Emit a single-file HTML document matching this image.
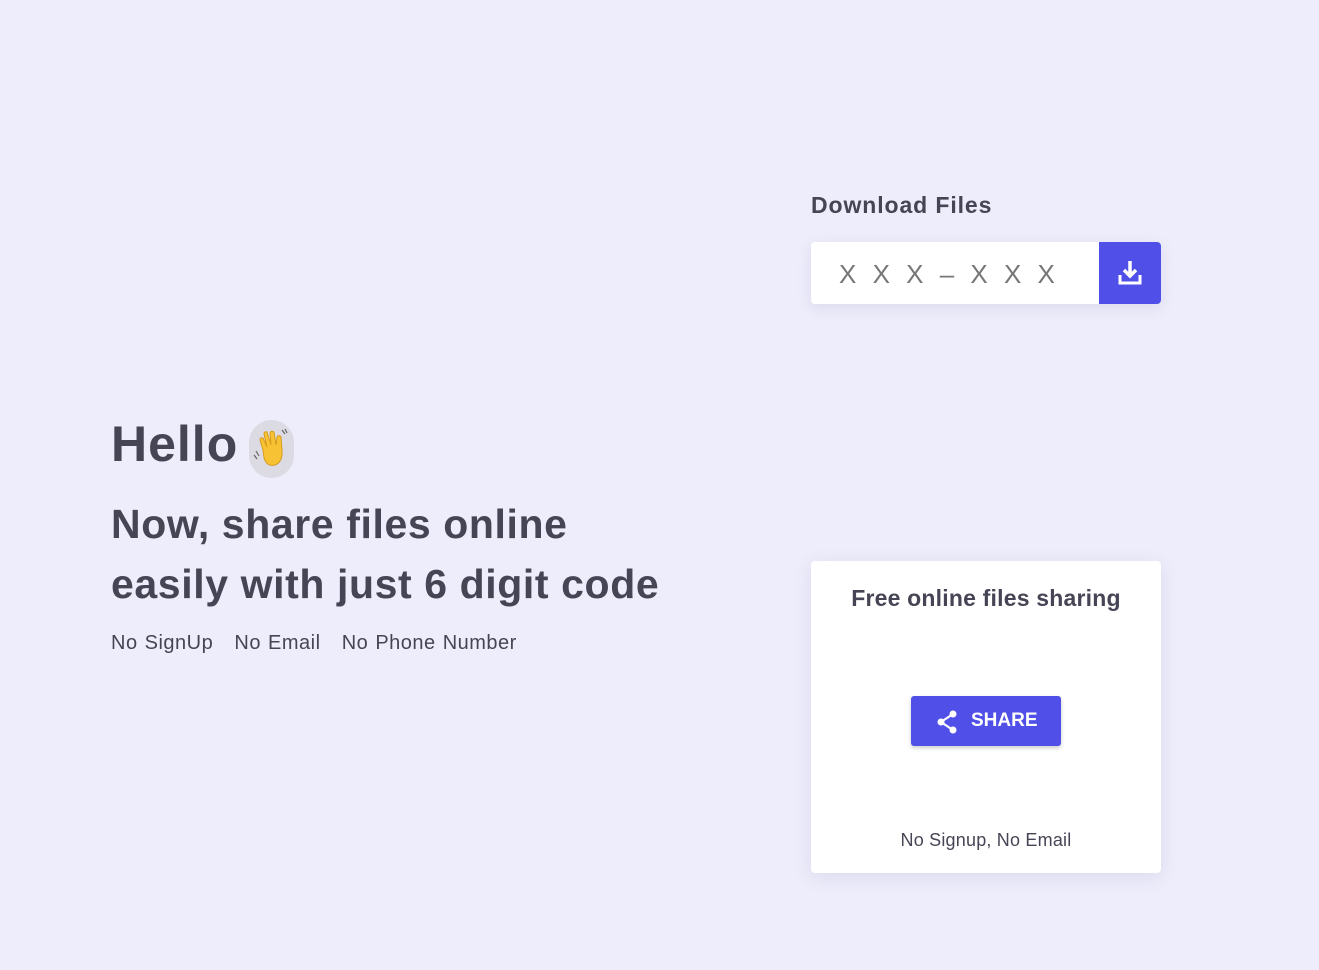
<!DOCTYPE html>
<html><head><meta charset="utf-8"><style>
body{margin:0;width:1319px;height:970px;background:#eeedfb;font-family:"Liberation Sans",sans-serif;color:#464555;position:relative;overflow:hidden}
.a{position:absolute}
h1{position:absolute;left:111px;top:414px;margin:0;font-size:50px;font-weight:bold;letter-spacing:1px;line-height:60px}
.pill{left:249px;top:420px;width:45px;height:58px;border-radius:23px;background:#dcdbe3}
.h2{left:111px;top:494px;font-size:41px;font-weight:bold;line-height:60px;letter-spacing:0.6px;width:580px}
.sub{left:111px;top:632px;font-size:20px;letter-spacing:0.5px;word-spacing:1px}
.dl{left:811px;top:192px;font-size:23px;font-weight:bold;letter-spacing:0.9px}
.box{left:811px;top:242px;width:350px;height:62px;background:#fff;border-radius:4px;box-shadow:0 4px 14px rgba(80,80,140,.12);overflow:hidden}
.box .x{position:absolute;left:28px;top:17px;font-size:26px;color:#777;word-spacing:8px;letter-spacing:0.5px}
.btn{position:absolute;right:0;top:0;width:62px;height:62px;background:#5050e8}
.card{left:811px;top:561px;width:350px;height:312px;background:#fff;border-radius:4px;box-shadow:0 4px 18px rgba(80,80,140,.12)}
.card .t{position:absolute;top:24px;width:100%;text-align:center;font-size:23px;font-weight:bold;color:#464555;letter-spacing:0.2px}
.share{position:absolute;left:100px;top:135px;width:150px;height:50px;background:#5050e8;border-radius:3px;box-shadow:0 2px 4px rgba(0,0,0,.2);color:#fff;font-weight:bold;font-size:19px}
.card .b{position:absolute;top:269px;width:100%;text-align:center;font-size:18px;letter-spacing:0.2px}
</style></head><body>
<h1>Hello</h1>
<div class="a pill"><svg width="45" height="58" viewBox="0 0 45 58"><path d="M14 30 L11 20 Q11 17 14 18 L18 27 L15 14 Q15 11 18 12 L22 25 L21 13 Q22 10 25 12 L27 25 L28 17 Q30 14 32 17 L33 30 Q34 42 26 45 Q18 47 15 38 Z" fill="#f7c234" stroke="#d89b1c" stroke-width="1"/><path d="M7 31 l3 5 M5 35 l3 4 M33 10 l3 4 M36 9 l2 4" stroke="#666" stroke-width="1.2"/></svg></div>
<div class="a h2">Now, share files online<br>easily with just 6 digit code</div>
<div class="a sub">No SignUp&nbsp;&nbsp; No Email&nbsp;&nbsp; No Phone Number</div>
<div class="a dl">Download Files</div>
<div class="a box"><div class="x">X X X – X X X</div><div class="btn"><svg width="62" height="62" viewBox="0 0 62 62"><path d="M31 19v15M25 28l6 6 6-6" stroke="#fff" stroke-width="3.5" fill="none"/><path d="M21 33v8h20v-8" stroke="#fff" stroke-width="3" fill="none"/></svg></div></div>
<div class="a card"><div class="t">Free online files sharing</div>
<div class="share"><svg class="a" style="left:25px;top:14px" width="22" height="24" viewBox="0 0 22 24"><circle cx="17" cy="4" r="3.5" fill="#fff"/><circle cx="5" cy="12" r="3.5" fill="#fff"/><circle cx="17" cy="20" r="3.5" fill="#fff"/><path d="M17 4L5 12L17 20" stroke="#fff" stroke-width="2.2" fill="none"/></svg><span class="a" style="left:60px;top:14px">SHARE</span></div>
<div class="b">No Signup, No Email</div></div>
</body></html>
